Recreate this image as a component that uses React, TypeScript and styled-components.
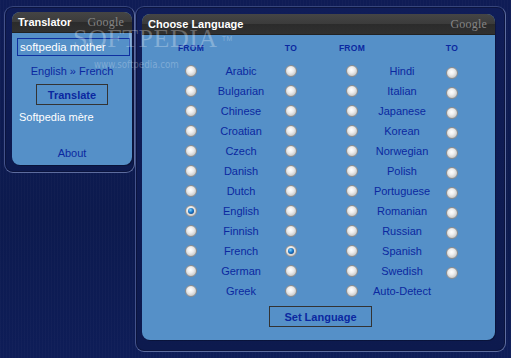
import React from 'react'
import styled, { createGlobalStyle } from 'styled-components'

const GlobalStyle = createGlobalStyle`
  html, body {
    margin: 0;
    padding: 0;
    background: #0d1a50;
  }
  body {
    font-family: "Liberation Sans", Arial, sans-serif;
  }
`

const Desktop = styled.div`
  position: relative;
  width: 511px;
  height: 358px;
  overflow: hidden;
  display: flex;
  align-items: flex-start;
  padding: 6px 0 0 4px;
  box-sizing: border-box;
  background:
    repeating-linear-gradient(90deg, rgba(255, 255, 255, 0.02) 0 1px, transparent 1px 3px),
    linear-gradient(180deg, #0f1c56 0%, #0c1a4e 60%, #0e1d58 100%);
`

const Frame = styled.div<{ $w: number; $h: number; $pad: string }>`
  width: ${({ $w }) => $w}px;
  height: ${({ $h }) => $h}px;
  box-sizing: border-box;
  padding: ${({ $pad }) => $pad};
  border: 1px solid #5d6c9e;
  border-top-color: #36457c;
  border-left-color: #43528a;
  border-radius: 9px;
  background: linear-gradient(180deg, #101d58, #0d1a4e);
  box-shadow: inset 0 0 0 1px rgba(10, 16, 50, 0.6);
`

const Panel = styled.div<{ $w: number; $h: number }>`
  width: ${({ $w }) => $w}px;
  height: ${({ $h }) => $h}px;
  border-radius: 8px;
  overflow: hidden;
  background: #5590c8;
  display: flex;
  flex-direction: column;
  box-shadow: 1px 1px 0 rgba(0, 0, 0, 0.25);
`

const Header = styled.div`
  height: 21px;
  flex: none;
  display: flex;
  align-items: center;
  justify-content: space-between;
  padding: 0 8px 0 6px;
  background: linear-gradient(180deg, #454545 0%, #3b3b3b 50%, #2b2b2b 51%, #303030 100%);
  border-bottom: 1px solid #222;
  box-sizing: border-box;
`

const Title = styled.span`
  color: #fff;
  font-weight: bold;
  font-size: 11px;
`

const GoogleMark = styled.span`
  color: #858585;
  font-family: "Liberation Serif", "Times New Roman", serif;
  font-size: 12px;
  letter-spacing: 0.2px;
`

const LeftBody = styled.div`
  display: flex;
  flex-direction: column;
  align-items: center;
  padding-top: 5px;
`

const TextInput = styled.div`
  align-self: flex-start;
  margin-left: 5px;
  width: 113px;
  height: 18px;
  box-sizing: border-box;
  border: 1px solid #0f2fa0;
  color: #fff;
  font-size: 11.5px;
  line-height: 16px;
  padding-left: 2px;
`

const DarkText = styled.div<{ $mt: number }>`
  margin-top: ${({ $mt }) => $mt}px;
  color: #0b28a0;
  font-size: 11px;
  line-height: 14px;
`

const Result = styled.div`
  align-self: flex-start;
  margin: 5px 0 0 7px;
  color: #fff;
  font-size: 11px;
  line-height: 14px;
`

const Button = styled.div<{ $w: number; $mt: number; $ml?: number }>`
  margin-top: ${({ $mt }) => $mt}px;
  margin-left: ${({ $ml }) => $ml ?? 0}px;
  width: ${({ $w }) => $w}px;
  height: 21px;
  box-sizing: border-box;
  border: 1px solid #333;
  display: flex;
  align-items: center;
  justify-content: center;
  color: #0b28a0;
  font-weight: bold;
  font-size: 11px;
`

const RightBody = styled.div`
  display: flex;
  flex-direction: column;
  align-items: center;
  padding-top: 6px;
`

const Groups = styled.div`
  display: flex;
  gap: 11px;
  margin-left: 24px;
  align-self: flex-start;
`

const Group = styled.div`
  display: grid;
  grid-template-columns: 50px 50px 50px;
  grid-template-rows: 20px;
  grid-auto-rows: 20px;
`

const ColHead = styled.div`
  align-self: start;
  height: 14px;
  display: flex;
  align-items: center;
  justify-content: center;
  color: #0b28a0;
  font-weight: bold;
  font-size: 8.5px;
  letter-spacing: 0.3px;
`

const Cell = styled.div`
  display: flex;
  align-items: center;
  justify-content: center;
  color: #0b28a0;
  font-size: 11px;
  white-space: nowrap;
`

const Radio = styled.span<{ $on?: boolean; $drop?: boolean }>`
  width: 12px;
  height: 12px;
  margin-top: ${({ $drop }) => ($drop ? 3 : 0)}px;
  border-radius: 50%;
  box-sizing: border-box;
  border: 1px solid #8d8d8d;
  background: radial-gradient(circle at 45% 40%, #ffffff 0%, #eeeeee 35%, #c4c4c4 80%, #a8a8a8 100%);
  display: flex;
  align-items: center;
  justify-content: center;
  &::after {
    content: '';
    display: ${({ $on }) => ($on ? 'block' : 'none')};
    width: 6px;
    height: 6px;
    border-radius: 50%;
    background: radial-gradient(circle at 40% 35%, #7fd0ff 0%, #1a78c8 45%, #0a2a6a 100%);
  }
`

const Watermark = styled.div`
  position: absolute;
  left: 73px;
  top: 29px;
  pointer-events: none;
  color: rgba(255, 255, 255, 0.28);
  font-family: "Liberation Serif", "Times New Roman", serif;
  font-size: 26px;
  letter-spacing: 0.5px;
  line-height: 20px;
  sup {
    font-family: "Liberation Sans", Arial, sans-serif;
    font-size: 7px;
    vertical-align: top;
    margin-left: 4px;
  }
`

const WatermarkUrl = styled.div`
  position: absolute;
  left: 94px;
  top: 58px;
  pointer-events: none;
  color: rgba(255, 255, 255, 0.25);
  font-family: "DejaVu Sans Condensed", "DejaVu Sans", sans-serif;
  font-size: 10.5px;
  line-height: 12px;
  transform: scaleX(0.92);
  transform-origin: left;
`

const leftLangs = ['Arabic', 'Bulgarian', 'Chinese', 'Croatian', 'Czech', 'Danish', 'Dutch', 'English', 'Finnish', 'French', 'German', 'Greek']
const rightLangs = ['Hindi', 'Italian', 'Japanese', 'Korean', 'Norwegian', 'Polish', 'Portuguese', 'Romanian', 'Russian', 'Spanish', 'Swedish', 'Auto-Detect']

const from = 'English'
const to = 'French'

export default function App() {
  return (
    <Desktop>
      <GlobalStyle />
      <Frame $w={131} $h={167} $pad="5px 0 0 7px">
        <Panel $w={120} $h={153}>
          <Header>
            <Title>Translator</Title>
            <GoogleMark>Google</GoogleMark>
          </Header>
          <LeftBody>
            <TextInput>softpedia mother</TextInput>
            <DarkText $mt={8}>English » French</DarkText>
            <Button $w={72} $mt={6}>Translate</Button>
            <Result>Softpedia mère</Result>
            <DarkText $mt={22}>About</DarkText>
          </LeftBody>
        </Panel>
      </Frame>
      <Frame $w={371} $h={346} $pad="7px 0 0 6px">
        <Panel $w={353} $h={326}>
          <Header>
            <Title>Choose Language</Title>
            <GoogleMark>Google</GoogleMark>
          </Header>
          <RightBody>
            <Groups>
              <Group>
                <ColHead>FROM</ColHead>
                <ColHead />
                <ColHead>TO</ColHead>
                {leftLangs.map((l) => (
                  <React.Fragment key={l}>
                    <Cell><Radio $on={l === from} /></Cell>
                    <Cell>{l}</Cell>
                    <Cell><Radio $on={l === to} /></Cell>
                  </React.Fragment>
                ))}
              </Group>
              <Group>
                <ColHead>FROM</ColHead>
                <ColHead />
                <ColHead>TO</ColHead>
                {rightLangs.map((l) => (
                  <React.Fragment key={l}>
                    <Cell><Radio /></Cell>
                    <Cell>{l}</Cell>
                    <Cell>{l !== 'Auto-Detect' && <Radio $drop />}</Cell>
                  </React.Fragment>
                ))}
              </Group>
            </Groups>
            <Button $w={103} $mt={5} $ml={4}>Set Language</Button>
          </RightBody>
        </Panel>
      </Frame>
      <Watermark>SOFTPEDIA<sup>TM</sup></Watermark>
      <WatermarkUrl>www.softpedia.com</WatermarkUrl>
    </Desktop>
  )
}
